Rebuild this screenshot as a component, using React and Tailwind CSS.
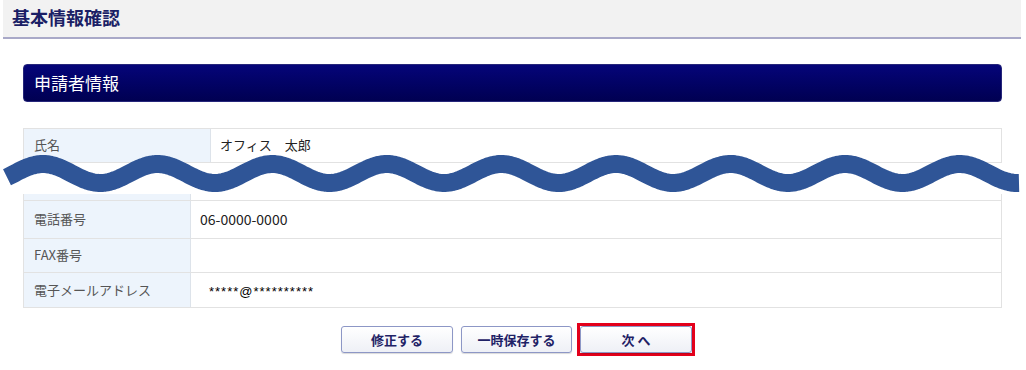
import React from "react";

const JP = { fontFamily: '"Noto Sans CJK JP", "Noto Sans", sans-serif' };

function Wave() {
  const pts = [];
  for (let x = 7; x <= 1020; x += 2) {
    const y = 173.5 - 9.5 * Math.cos((2 * Math.PI * (x - 43)) / 114.6);
    pts.push(`${x === 7 ? "M" : "L"}${x} ${y.toFixed(2)}`);
  }
  return (
    <svg
      className="absolute left-0 top-0 pointer-events-none"
      width="1026"
      height="370"
      viewBox="0 0 1026 370"
    >
      <path d={pts.join(" ")} fill="none" stroke="#2f5597" strokeWidth="18" strokeLinecap="butt" strokeLinejoin="round" />
    </svg>
  );
}

function Row({ label, value, labelW, h, valueClass = "", last }) {
  return (
    <div className={`flex ${last ? "" : "border-b"} border-[#e2e2e2]`} style={{ height: h }}>
      <div
        className="shrink-0 bg-[#edf4fc] border-r border-[#dde3ea] pl-[10px] pb-[2px] flex items-center text-[13px] leading-none text-[#555]"
        style={{ width: labelW }}
      >
        {label}
      </div>
      <div className={`flex-1 flex items-center pb-[2px] leading-none ${valueClass}`}>{value}</div>
    </div>
  );
}

function Btn({ children, className = "" }) {
  return (
    <button
      className={`h-[27px] rounded-[3px] border border-[#8d97c6] bg-gradient-to-b from-white to-[#eef0f6] text-[13px] font-bold text-[#1f2266] shadow-[0_1px_1px_rgba(0,0,0,0.15)] ${className}`}
      style={JP}
    >
      {children}
    </button>
  );
}

export default function App() {
  return (
    <div className="relative w-[1026px] h-[370px] overflow-hidden bg-white" style={JP}>
      <div className="ml-[3px] w-[1018px] h-[39px] bg-[#f2f2f2] border-b-2 border-[#a9a9c8] pl-[9px] pb-[3px] flex items-center">
        <span className="text-[18px] font-bold text-[#1b1f66] leading-none">基本情報確認</span>
      </div>

      <div className="ml-[23px] mt-[25px] w-[979px] h-[38px] rounded-[4px] bg-gradient-to-b from-[#050579] to-[#000052] border border-[#26267a] pl-[10px] pb-[1px] flex items-center">
        <span className="text-[17px] text-white leading-none">申請者情報</span>
      </div>

      <div className="ml-[23px] mt-[26px] w-[979px] border-t border-r border-l border-[#e2e2e2]">
        <Row label="氏名" labelW={187} h={34} valueClass="pl-[9px] text-[13px] text-[#222]" value="オフィス　太郎" />
      </div>

      <div className="ml-[23px] mt-[31px] w-[979px] border-r border-l border-b border-[#e2e2e2]">
        <Row label="" labelW={167} h={7} value="" />
        <Row label="電話番号" labelW={167} h={38} valueClass="pl-[9px] text-[14px] text-[#222]" value="06-0000-0000" />
        <Row label="FAX番号" labelW={167} h={34} value="" />
        <Row
          label="電子メールアドレス"
          labelW={167}
          h={34}
          last
          valueClass="pl-[18px] text-[13px] text-black"
          value={<span className="relative top-[2px]" style={{ fontFamily: '"Liberation Sans", sans-serif', letterSpacing: "1px" }}>*****@**********</span>}
        />
      </div>

      <div className="mt-[15px] ml-[341px] flex items-center">
        <Btn className="w-[112px]">修正する</Btn>
        <Btn className="w-[111px] ml-[8px]">一時保存する</Btn>
        <div className="ml-[5px] border-[3px] border-[#e3001b]">
          <Btn className="w-[112px] h-[25px] block">次 へ</Btn>
        </div>
      </div>

      <Wave />
    </div>
  );
}
